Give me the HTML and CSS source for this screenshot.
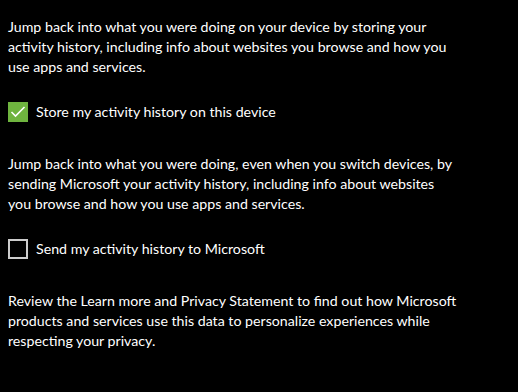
FILE: index.html
```html
<!DOCTYPE html>
<html lang="en">
<head>
<meta charset="utf-8">
<link rel="stylesheet" href="styles.css">
</head>
<body>
<main class="panel">
  <p class="desc">Jump back into what you were doing on your device by storing your activity history, including info about websites you browse and how you use apps and services.</p>
  <label class="check">
    <span class="box checked">
      <svg viewBox="0 0 20 20" width="20" height="20"><path d="M3.5 10 L7.5 14 L16.5 5" fill="none" stroke="#fff" stroke-width="1.6"/></svg>
    </span>
    <span class="label">Store my activity history on this device</span>
  </label>
  <p class="desc">Jump back into what you were doing, even when you switch devices, by sending Microsoft your activity history, including info about websites you browse and how you use apps and services.</p>
  <label class="check">
    <span class="box"></span>
    <span class="label">Send my activity history to Microsoft</span>
  </label>
  <p class="desc">Review the Learn more and Privacy Statement to find out how Microsoft products and services use this data to personalize experiences while respecting your privacy.</p>
</main>
</body>
</html>
```
FILE: styles.css
```css
html, body {
  margin: 0;
  padding: 0;
  background: #000;
}
body {
  width: 518px;
  height: 392px;
  overflow: hidden;
  color: #fff;
  font-family: "Lato", "Noto Sans", sans-serif;
  font-size: 14.2px;
  line-height: 20px;
}
.panel {
  padding: 17px 0 0 8px;
  width: 450px;
  display: flex;
  flex-direction: column;
}
.desc {
  margin: 0 0 25px 0;
}
.check {
  display: flex;
  align-items: center;
  gap: 8px;
  height: 20px;
  margin-bottom: 32px;
}
.box {
  width: 20px;
  height: 20px;
  box-sizing: border-box;
  border: 2px solid #cccccc;
  flex: none;
}
.box.checked {
  border: none;
  background: #6fb43f;
}
.box svg {
  display: block;
}
```
